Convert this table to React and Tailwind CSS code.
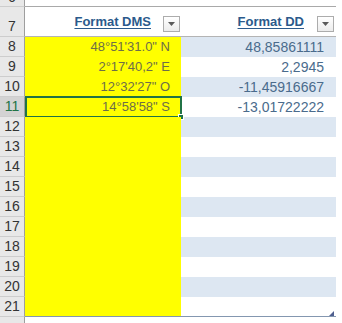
import React from 'react';

const rows = [
  { n: 8, dms: '48°51\'31.0" N', dd: '48,85861111' },
  { n: 9, dms: '2°17\'40,2" E', dd: '2,2945' },
  { n: 10, dms: '12°32\'27" O', dd: '-11,45916667' },
  { n: 11, dms: '14°58\'58" S', dd: '-13,01722222', selected: true },
  { n: 12 }, { n: 13 }, { n: 14 }, { n: 15 }, { n: 16 }, { n: 17 },
  { n: 18 }, { n: 19 }, { n: 20 }, { n: 21 },
];

const FilterButton = () => (
  <div className="w-[17px] h-[16px] mb-[4px] self-end border border-[#acacac] bg-gradient-to-b from-white to-[#ececec] flex items-center justify-center">
    <svg width="7" height="4" viewBox="0 0 7 4">
      <path d="M0 0 L7 0 L3.5 4 Z" fill="#5a5a5a" />
    </svg>
  </div>
);

const RowHead = ({ children, selected, last }) => (
  <div
    className={`w-[25px] shrink-0 h-full flex items-end justify-center pb-[3px] border-r border-r-[#9e9e9e] text-[14px] leading-[14px] ${
      last ? '' : 'border-b border-b-[#cdcdcd]'
    } ${selected ? 'bg-[#d3d3d3] text-[#217346]' : 'bg-[#e8e8e8] text-[#333]'}`}
  >
    {children}
  </div>
);

export default function App() {
  return (
    <div
      className="w-[342px] h-[323px] overflow-hidden bg-white flex flex-col"
      style={{ fontFamily: '"Liberation Sans", Arial, sans-serif' }}
    >
      {/* row 6, cut off */}
      <div className="h-[7px] flex shrink-0 overflow-hidden">
        <div className="w-[25px] shrink-0 h-full relative overflow-hidden bg-[#e8e8e8] border-r border-r-[#9e9e9e] border-b border-b-[#cdcdcd]">
          <div className="absolute left-0 right-0 bottom-[-1px] h-[20px] flex items-end justify-center pb-[3px] text-[14px] leading-[14px] text-[#333]">
            6
          </div>
        </div>
        <div className="w-[311px] h-full border-b border-b-[#a9a9a9]" />
        <div className="flex-1" />
      </div>

      {/* row 7, table header */}
      <div className="h-[30px] flex shrink-0">
        <RowHead>7</RowHead>
        <div className="w-[156px] h-full flex items-center justify-end gap-[12px] pr-[1px] border-b border-b-[#b4b4b4]">
          <span className="text-[13px] leading-[16px] font-bold text-[#2b5a8c] underline underline-offset-2">Format DMS</span>
          <FilterButton />
        </div>
        <div className="w-[155px] h-full flex items-center justify-end gap-[13px] pr-[2px] border-b border-b-[#b4b4b4]">
          <span className="text-[13px] leading-[16px] font-bold text-[#2b5a8c] underline underline-offset-2">Format DD</span>
          <FilterButton />
        </div>
        <div className="flex-1" />
      </div>

      {rows.map((r, i) => {
        const last = i === rows.length - 1;
        return (
          <div key={r.n} className="h-[20px] flex shrink-0">
            <RowHead selected={r.selected}>{r.n}</RowHead>
            <div
              className={`w-[156px] h-full relative bg-[#ffff00] flex items-end justify-end pr-[11px] pb-[3px] text-[13px] leading-[14px] text-[#6e6e48] ${
                last ? 'border-b border-b-[#8497b0]' : ''
              }`}
            >
              {r.dms}
              {r.selected && (
                <>
                  <div className="absolute left-0 right-[-1px] top-[-1px] bottom-[-1px] border-2 border-[#217346]" />
                  <div className="absolute right-[-3px] bottom-[-3px] w-[6px] h-[6px] bg-[#217346] border border-white" />
                </>
              )}
            </div>
            <div
              className={`w-[155px] h-full flex items-end justify-end pr-[12px] pb-[3px] text-[14px] leading-[14px] text-[#4a6b8c] ${
                i % 2 === 0 ? 'bg-[#dde7f2]' : 'bg-white'
              } ${last ? 'border-b border-b-[#8497b0] relative' : ''}`}
            >
              {r.dd}
              {last && (
                <div className="absolute right-[2px] bottom-[0px] w-[5px] h-[5px]">
                  <svg width="5" height="5" viewBox="0 0 5 5">
                    <path d="M5 0 L5 5 L0 5 Z" fill="#4f5f8f" />
                  </svg>
                </div>
              )}
            </div>
            <div className="flex-1" />
          </div>
        );
      })}

      {/* row 22 */}
      <div className="flex-1 flex">
        <div className="w-[25px] shrink-0 bg-[#e8e8e8] border-r border-r-[#9e9e9e]" />
        <div className="flex-1" />
      </div>
    </div>
  );
}
